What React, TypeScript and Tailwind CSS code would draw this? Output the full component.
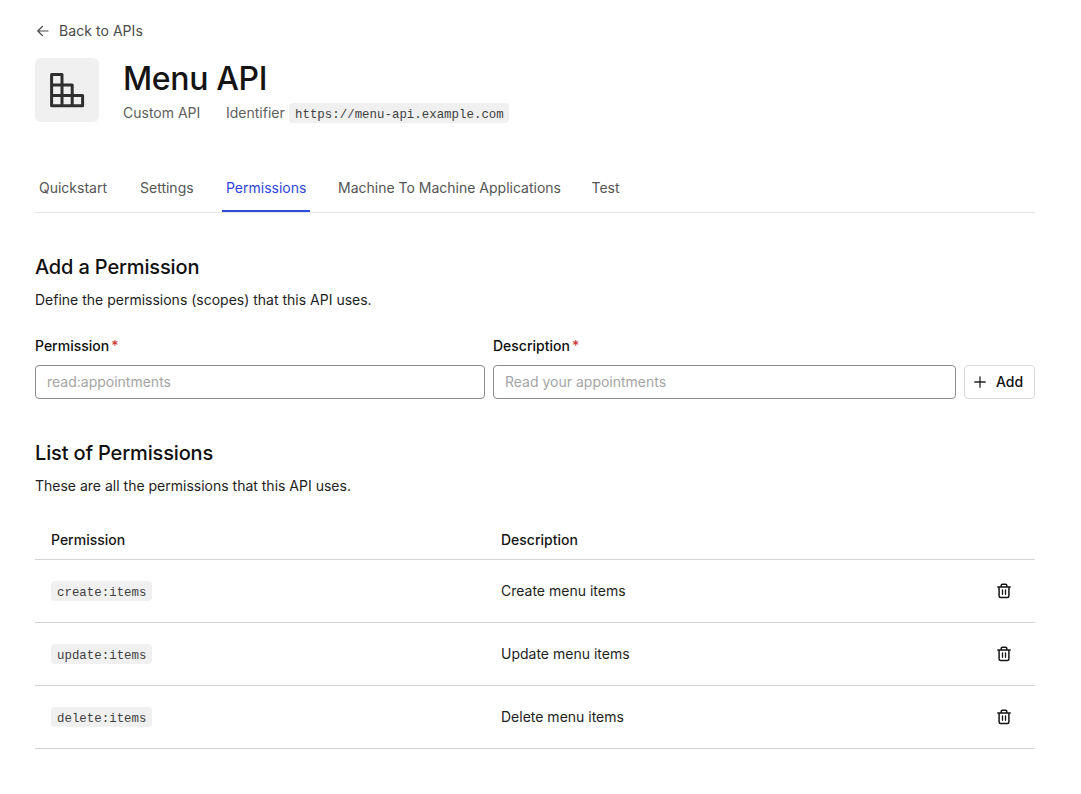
import type { ReactNode } from "react";

const tabs = [
  { label: "Quickstart", width: "w-[69px]" },
  { label: "Settings", width: "w-[54px]" },
  { label: "Permissions", width: "w-[80px]", active: true },
  { label: "Machine To Machine Applications", width: "w-[221.5px]" },
  { label: "Test", width: "w-[28px]" },
];

const permissions = [
  { scope: "create:items", description: "Create menu items" },
  { scope: "update:items", description: "Update menu items" },
  { scope: "delete:items", description: "Delete menu items" },
];

function Code({ children }: { children: ReactNode }) {
  return (
    <code className="flex h-5 items-center rounded-[4px] bg-[#f0f0f0] pt-[5px] pr-[5.5px] pl-[6px] font-['Liberation_Mono',monospace] text-[12.4px] leading-none tracking-[0.02px] whitespace-nowrap text-[#3f3f3f]">
      {children}
    </code>
  );
}

function ArrowLeft() {
  return (
    <svg width="16" height="16" viewBox="0 0 16 16" fill="none" stroke="#4a4a4a" strokeWidth="1.2" strokeLinecap="round" strokeLinejoin="round">
      <path d="M13 8H3M7.4 3.5L2.8 8L7.4 12.5" />
    </svg>
  );
}

function BlocksIcon() {
  return (
    <svg width="36" height="36" viewBox="0 0 36 36" fill="none" stroke="#2f2f2f" strokeWidth="3" strokeLinejoin="round">
      <path d="M2.6 2.4H13V33.8H2.6ZM2.6 13H23.2V33.8M2.6 23.4H33.6V33.8H13" />
    </svg>
  );
}

function TrashIcon() {
  return (
    <svg width="16" height="16" viewBox="0 0 16 16" fill="none" stroke="#161616" strokeWidth="1.5" strokeLinecap="round" strokeLinejoin="round">
      <path d="M1.8 3.9H14.2M5.2 3.7V2.4Q5.2 1.2 6.4 1.2H9.6Q10.8 1.2 10.8 2.4V3.7M3.1 4V13Q3.1 14.5 4.6 14.5H11.4Q12.9 14.5 12.9 13V4" />
      <path d="M6.5 7V11.3M9.5 7V11.3" strokeWidth="1.3" />
    </svg>
  );
}

function Field({ label, placeholder, className }: { label: string; placeholder: string; className: string }) {
  return (
    <label className={className}>
      <span className="flex h-5 items-center gap-[2px] text-[14px] font-medium text-[#101010]">
        {label}
        <span className="text-[#d03c38]">*</span>
      </span>
      <input
        className="mt-[9px] block h-[34px] w-full rounded-[4px] border border-[#8b8b8b] bg-white px-[11px] pb-[2px] text-[14px] outline-none placeholder:text-[#a5a5a5]"
        placeholder={placeholder}
      />
    </label>
  );
}

export default function App() {
  return (
    <main className="h-[794px] bg-white pt-[21px] pr-[46px] pl-[35px] font-['Inter',sans-serif] text-[14px] leading-5 text-[#1e1e1e]">
      <a className="flex h-5 w-fit items-center gap-2 tracking-[0.06px] text-[#4a4a4a]">
        <ArrowLeft />
        <span>Back to APIs</span>
      </a>

      <header className="mt-[17px] flex h-16 gap-6">
        <div className="flex size-16 items-center justify-center rounded-[6px] bg-[#f0f0f0]">
          <BlocksIcon />
        </div>
        <div>
          <h1 className="h-10 pt-px text-[32px] leading-10 font-medium tracking-[-0.35px] text-[#141414]">Menu API</h1>
          <div className="mt-[5px] flex h-5 items-center text-[#606060]">
            <span className="w-[103px]">Custom API</span>
            <span className="w-[63px]">Identifier</span>
            <Code>https://menu-api.example.com</Code>
          </div>
        </div>
      </header>

      <nav className="mt-[42px] flex h-[49px] gap-6 border-b border-[#e4e4e4]">
        {tabs.map((tab) => (
          <a
            key={tab.label}
            className={
              tab.active
                ? "box-border h-12 border-b-2 border-[#2f4cdf] px-1 pt-[14px] text-[#2f46dc]"
                : "box-border h-12 px-1 pt-[14px] text-[#555555]"
            }
          >
            <span className={`block whitespace-nowrap ${tab.width}`}>{tab.label}</span>
          </a>
        ))}
      </nav>

      <section>
        <h2 className="mt-10 h-7 text-[20px] leading-7 font-medium tracking-[-0.15px] text-[#101010]">Add a Permission</h2>
        <p className="mt-[9px]">Define the permissions (scopes) that this API uses.</p>
        <form className="mt-[26px] flex items-end gap-2">
          <Field label="Permission" placeholder="read:appointments" className="w-[450px]" />
          <Field label="Description" placeholder="Read your appointments" className="w-[463px]" />
          <button type="button" className="flex h-[34px] w-[71px] items-center rounded-[4px] border border-[#d9d9d9] pl-[9px] font-medium text-[#101010]">
            <svg width="12" height="12" viewBox="0 0 12 12" stroke="#222222" strokeWidth="1.3" strokeLinecap="round">
              <path d="M6 .8V11.2M.8 6H11.2" />
            </svg>
            <span className="ml-[10px]">Add</span>
          </button>
        </form>
      </section>

      <section>
        <h2 className="mt-10 h-7 text-[20px] leading-7 font-medium tracking-[-0.15px] text-[#101010]">List of Permissions</h2>
        <p className="mt-[9px]">These are all the permissions that this API uses.</p>
        <table className="mt-[23px] w-full table-fixed border-collapse text-left">
          <thead>
            <tr className="h-10 border-b border-[#d5d5d5] text-[#161616]">
              <th className="w-[450px] pt-[2px] pl-4 font-medium">Permission</th>
              <th className="pt-[2px] pl-4 font-medium">Description</th>
              <th className="w-[62px]" />
            </tr>
          </thead>
          <tbody>
            {permissions.map((permission) => (
              <tr key={permission.scope} className="h-[63px] border-b border-[#d5d5d5]">
                <td className="pl-4">
                  <div className="flex">
                    <Code>{permission.scope}</Code>
                  </div>
                </td>
                <td className="pl-4">{permission.description}</td>
                <td className="pl-[23px]">
                  <TrashIcon />
                </td>
              </tr>
            ))}
          </tbody>
        </table>
      </section>
    </main>
  );
}
